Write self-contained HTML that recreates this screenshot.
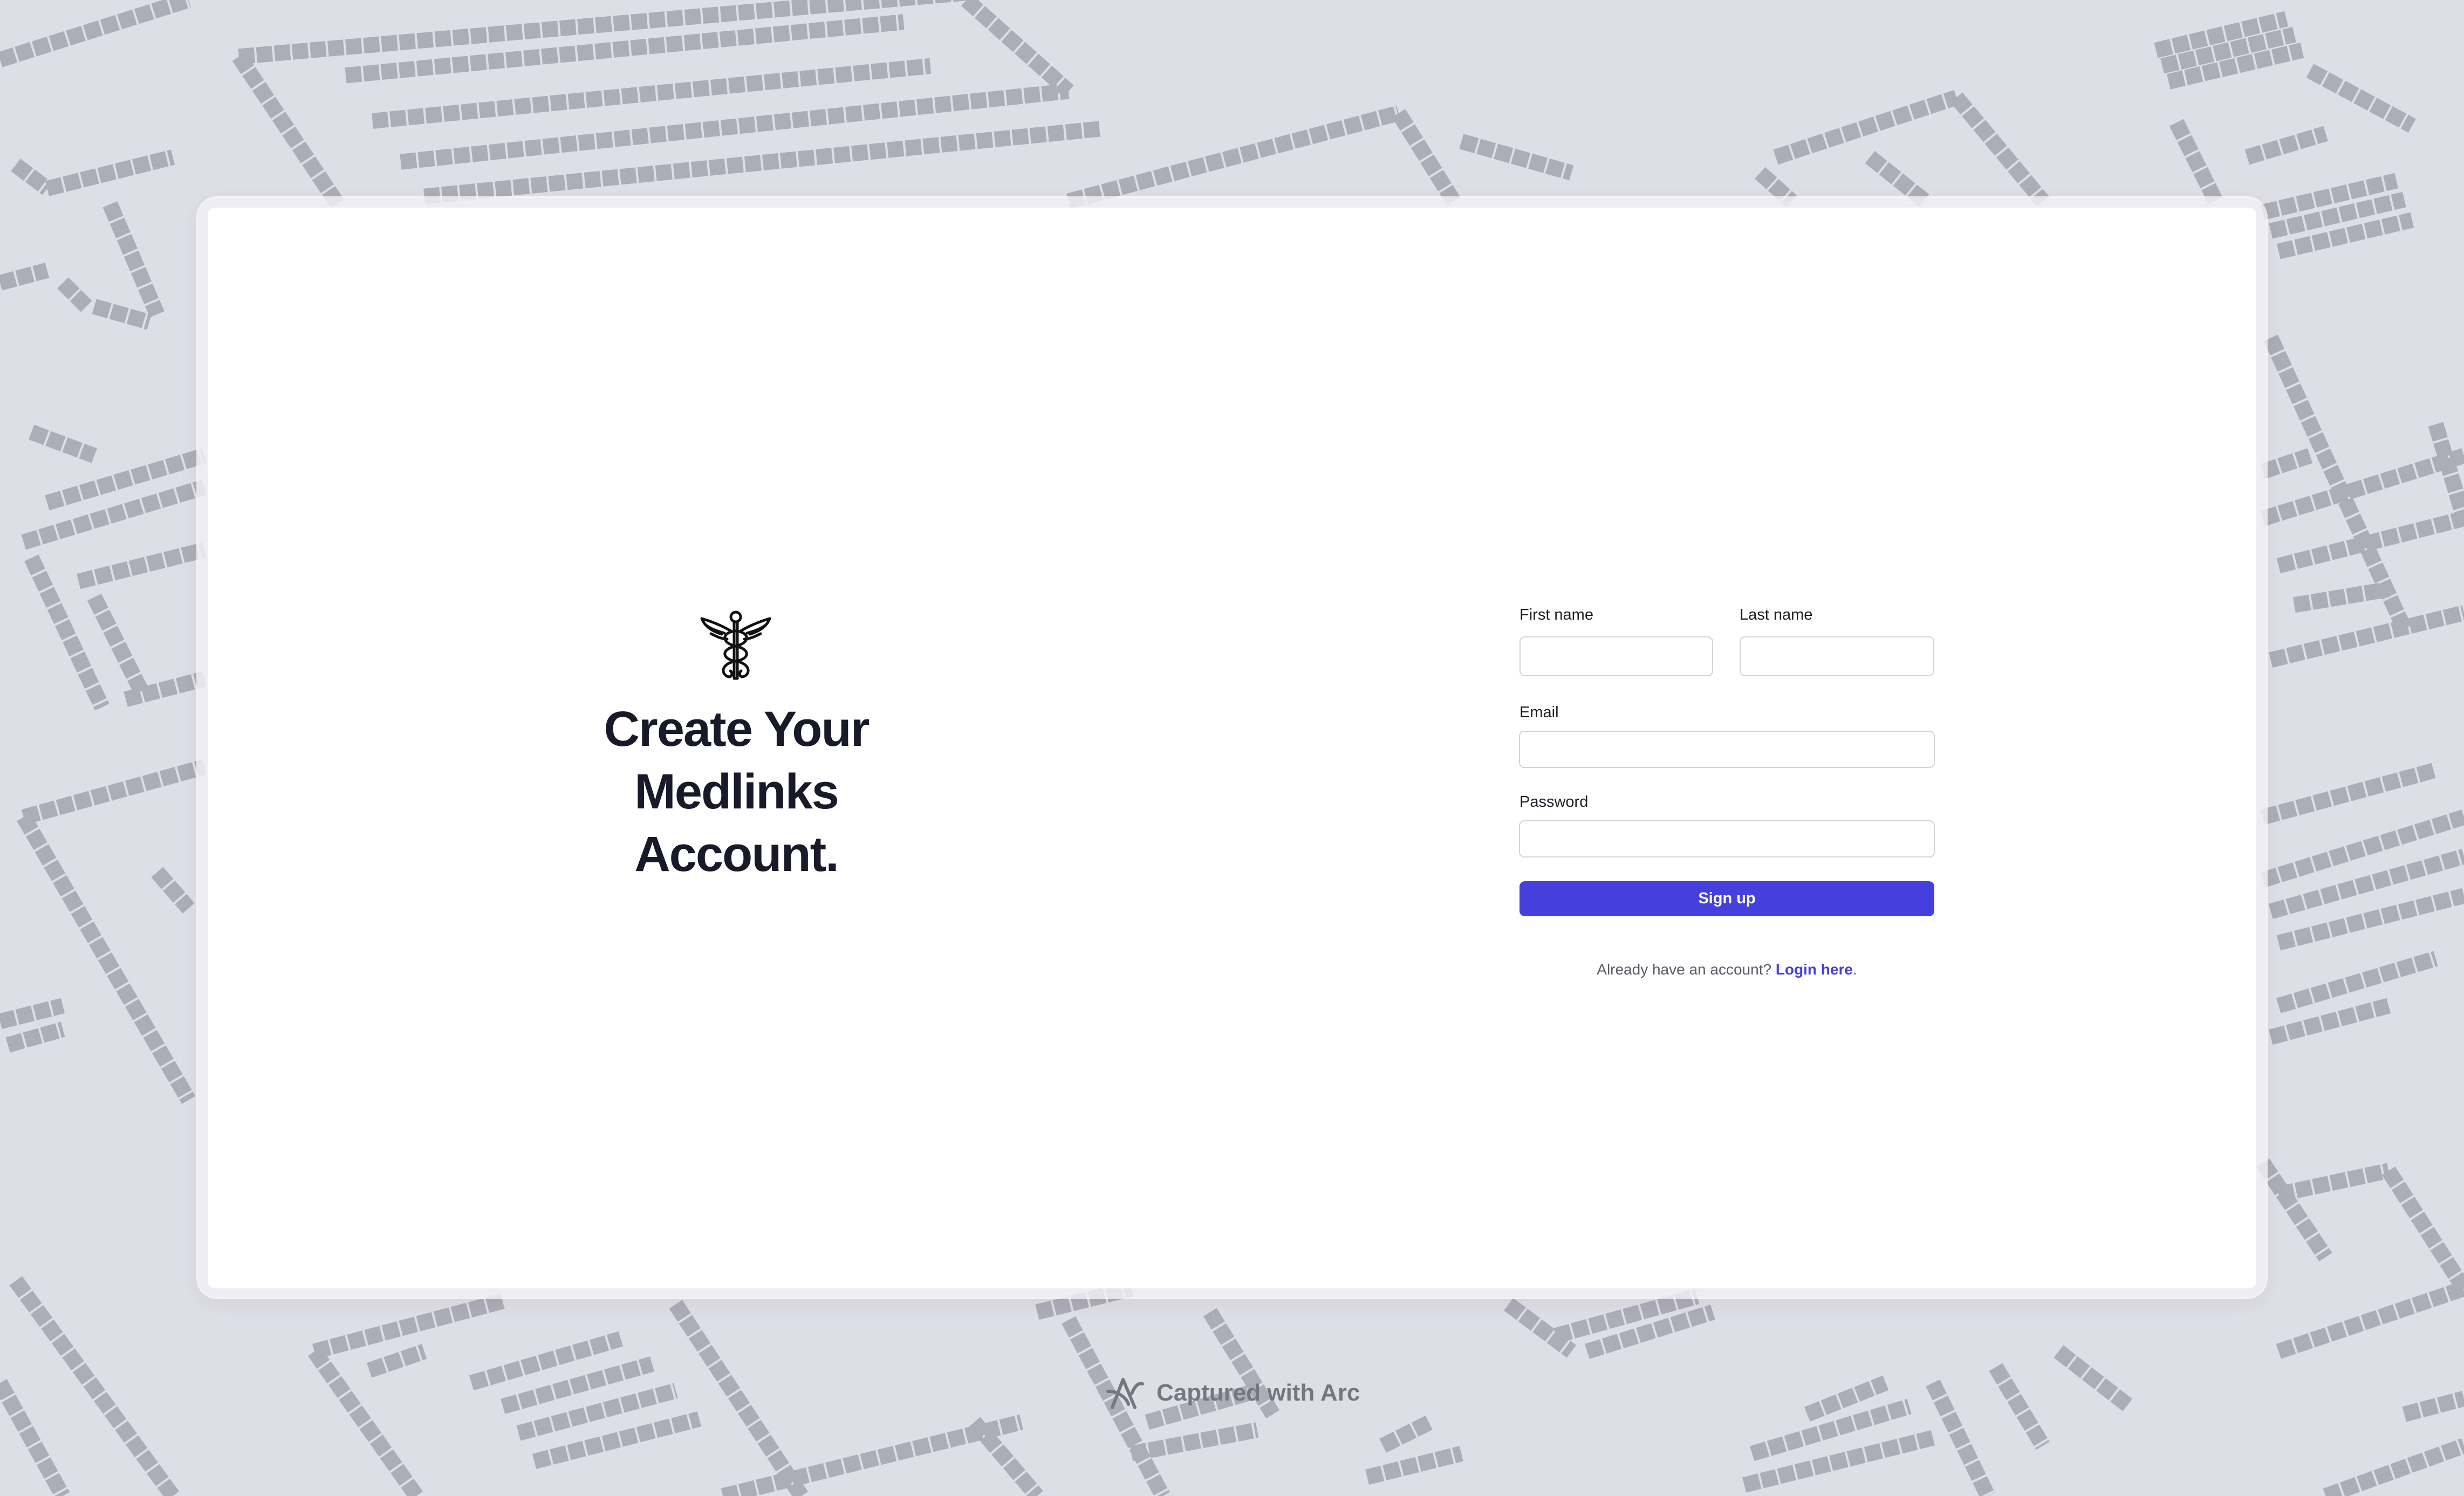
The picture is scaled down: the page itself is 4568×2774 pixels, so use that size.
<!DOCTYPE html>
<html><head><meta charset="utf-8"><style>
html,body{margin:0;padding:0}
body{width:4568px;height:2774px;position:relative;overflow:hidden;background:#dedee7;font-family:"Liberation Sans",sans-serif}
#bg{position:absolute;left:0;top:0;width:4568px;height:2774px}
.frame{position:absolute;left:367px;top:367px;width:3834px;height:2039px;border-radius:36px;background:rgba(240,240,245,0.82);box-shadow:0 0 0 3px rgba(255,255,255,0.7),0 10px 40px rgba(0,0,0,0.06)}
.card{position:absolute;left:385px;top:385px;width:3798px;height:2004px;background:#fff;border-radius:14px}
.logo{position:absolute;left:1298px;top:1130px}
h1{position:absolute;left:1085px;width:560px;top:1294px;margin:0;text-align:center;font-size:92px;line-height:116px;letter-spacing:-2px;font-weight:bold;color:#181a2a}
.lbl{position:absolute;font-size:29px;color:#1c1c24}
.inp{position:absolute;border:2px solid #d4d4dc;border-radius:10px;box-sizing:border-box;background:#fff}
.btn{position:absolute;left:2817px;top:1634px;width:769px;height:65px;background:#4540dd;border-radius:10px;color:#fff;font-weight:bold;font-size:29px;text-align:center;line-height:65px}
.foot{position:absolute;left:2817px;width:769px;top:1782px;text-align:center;font-size:28px;color:#5a5a66}
.foot b{color:#4540dd}
.arc{position:absolute;left:2048px;top:2548px;height:70px;display:flex;align-items:center;gap:22px;color:#76767e;font-weight:bold;font-size:44px}
</style></head><body>
<svg id="bg" viewBox="0 0 1568 952" preserveAspectRatio="none">
<g stroke="#adadb8" stroke-width="10" stroke-dasharray="10 1.4" fill="none">
<line x1="0" y1="38" x2="120" y2="0"/>
<line x1="152" y1="36" x2="620" y2="-5"/>
<line x1="152" y1="36" x2="215" y2="130"/>
<line x1="220" y1="48" x2="575" y2="14"/>
<line x1="237" y1="77" x2="592" y2="42"/>
<line x1="255" y1="103" x2="680" y2="58"/>
<line x1="615" y1="0" x2="680" y2="58"/>
<line x1="270" y1="125" x2="700" y2="82"/>
<line x1="680" y1="128" x2="890" y2="72"/>
<line x1="890" y1="72" x2="925" y2="128"/>
<line x1="930" y1="90" x2="1000" y2="110"/>
<line x1="1130" y1="100" x2="1245" y2="62"/>
<line x1="1245" y1="62" x2="1300" y2="128"/>
<line x1="1190" y1="100" x2="1225" y2="128"/>
<line x1="1120" y1="110" x2="1140" y2="128"/>
<line x1="1372" y1="32" x2="1455" y2="12"/>
<line x1="1376" y1="42" x2="1460" y2="22"/>
<line x1="1380" y1="52" x2="1465" y2="32"/>
<line x1="1470" y1="45" x2="1535" y2="80"/>
<line x1="1385" y1="78" x2="1410" y2="128"/>
<line x1="1430" y1="100" x2="1480" y2="85"/>
<line x1="1440" y1="135" x2="1525" y2="115"/>
<line x1="1445" y1="147" x2="1530" y2="127"/>
<line x1="1450" y1="160" x2="1535" y2="140"/>
<line x1="10" y1="105" x2="30" y2="120"/>
<line x1="30" y1="120" x2="110" y2="100"/>
<line x1="70" y1="130" x2="100" y2="200"/>
<line x1="0" y1="180" x2="30" y2="172"/>
<line x1="40" y1="180" x2="55" y2="195"/>
<line x1="60" y1="195" x2="95" y2="205"/>
<line x1="20" y1="275" x2="60" y2="290"/>
<line x1="30" y1="320" x2="130" y2="290"/>
<line x1="15" y1="345" x2="130" y2="310"/>
<line x1="20" y1="355" x2="65" y2="450"/>
<line x1="50" y1="370" x2="130" y2="350"/>
<line x1="60" y1="380" x2="90" y2="440"/>
<line x1="80" y1="445" x2="130" y2="432"/>
<line x1="15" y1="520" x2="130" y2="488"/>
<line x1="15" y1="520" x2="120" y2="700"/>
<line x1="100" y1="555" x2="120" y2="578"/>
<line x1="0" y1="650" x2="40" y2="640"/>
<line x1="5" y1="665" x2="40" y2="655"/>
<line x1="10" y1="815" x2="110" y2="952"/>
<line x1="0" y1="880" x2="40" y2="952"/>
<line x1="200" y1="860" x2="320" y2="828"/>
<line x1="200" y1="860" x2="265" y2="952"/>
<line x1="235" y1="872" x2="270" y2="860"/>
<line x1="300" y1="880" x2="395" y2="852"/>
<line x1="320" y1="895" x2="415" y2="868"/>
<line x1="330" y1="912" x2="430" y2="885"/>
<line x1="340" y1="930" x2="445" y2="903"/>
<line x1="430" y1="830" x2="510" y2="952"/>
<line x1="460" y1="952" x2="650" y2="905"/>
<line x1="620" y1="905" x2="660" y2="952"/>
<line x1="660" y1="835" x2="720" y2="820"/>
<line x1="680" y1="840" x2="740" y2="952"/>
<line x1="770" y1="835" x2="810" y2="900"/>
<line x1="730" y1="905" x2="800" y2="885"/>
<line x1="720" y1="925" x2="800" y2="910"/>
<line x1="880" y1="920" x2="910" y2="905"/>
<line x1="870" y1="940" x2="930" y2="925"/>
<line x1="960" y1="830" x2="1000" y2="860"/>
<line x1="990" y1="850" x2="1080" y2="825"/>
<line x1="1010" y1="860" x2="1090" y2="835"/>
<line x1="1150" y1="900" x2="1200" y2="880"/>
<line x1="1115" y1="925" x2="1215" y2="895"/>
<line x1="1110" y1="945" x2="1230" y2="915"/>
<line x1="1230" y1="880" x2="1265" y2="952"/>
<line x1="1270" y1="870" x2="1300" y2="920"/>
<line x1="1310" y1="860" x2="1355" y2="895"/>
<line x1="1445" y1="215" x2="1530" y2="400"/>
<line x1="1440" y1="300" x2="1470" y2="290"/>
<line x1="1440" y1="330" x2="1568" y2="290"/>
<line x1="1450" y1="360" x2="1568" y2="330"/>
<line x1="1460" y1="385" x2="1520" y2="375"/>
<line x1="1445" y1="420" x2="1568" y2="390"/>
<line x1="1550" y1="270" x2="1568" y2="330"/>
<line x1="1440" y1="520" x2="1550" y2="490"/>
<line x1="1440" y1="560" x2="1568" y2="520"/>
<line x1="1445" y1="580" x2="1568" y2="545"/>
<line x1="1450" y1="600" x2="1568" y2="570"/>
<line x1="1450" y1="640" x2="1550" y2="610"/>
<line x1="1445" y1="660" x2="1520" y2="640"/>
<line x1="1440" y1="740" x2="1480" y2="800"/>
<line x1="1450" y1="760" x2="1520" y2="745"/>
<line x1="1520" y1="745" x2="1568" y2="820"/>
<line x1="1450" y1="860" x2="1568" y2="820"/>
<line x1="1530" y1="900" x2="1568" y2="890"/>
<line x1="1480" y1="952" x2="1568" y2="920"/>
</g></svg>
<div class="frame"></div>
<div class="card"></div>
<svg class="logo" width="132" height="134" viewBox="0 0 132 134" fill="none" stroke="#111" stroke-width="5" stroke-linecap="round" stroke-linejoin="round">
<circle cx="66" cy="14" r="9"/>
<line x1="63" y1="23" x2="63" y2="128"/><line x1="69" y1="23" x2="69" y2="128"/><line x1="63" y1="128" x2="69" y2="128"/>
<path d="M57 40 C40 30 20 22 3 17 C8 30 20 40 40 46"/>
<path d="M12 30 C20 36 30 40 45 44"/>
<path d="M20 45 C30 50 40 55 50 55"/>
<path d="M75 40 C92 30 112 22 129 17 C124 30 112 40 92 46"/>
<path d="M120 30 C112 36 102 40 87 44"/>
<path d="M112 45 C102 50 92 55 82 55"/>
<path d="M66 40 C40 42 38 62 66 68 C94 74 92 92 66 96 C40 100 38 118 50 124 C58 128 62 118 56 114"/>
<path d="M66 40 C92 42 94 62 66 68 C38 74 40 92 66 96 C92 100 94 118 82 124 C74 128 70 118 76 114"/>
</svg>
<h1>Create Your Medlinks Account.</h1>
<div class="lbl" style="left:2817px;top:1124px">First name</div>
<div class="lbl" style="left:3225px;top:1124px">Last name</div>
<div class="inp" style="left:2817px;top:1180px;width:359px;height:74px"></div>
<div class="inp" style="left:3225px;top:1180px;width:361px;height:74px"></div>
<div class="lbl" style="left:2817px;top:1305px">Email</div>
<div class="inp" style="left:2816px;top:1355px;width:771px;height:69px"></div>
<div class="lbl" style="left:2817px;top:1471px">Password</div>
<div class="inp" style="left:2816px;top:1521px;width:771px;height:69px"></div>
<div class="btn">Sign up</div>
<div class="foot">Already have an account? <b>Login here</b>.</div>
<div class="arc"><svg width="74" height="66" viewBox="0 0 74 66" fill="none" stroke="#76767e" stroke-width="6" stroke-linecap="round" stroke-linejoin="round"><path d="M14 60 L34 8 L56 60"/><path d="M6 30 C20 28 40 40 44 54"/><path d="M50 34 C56 20 62 14 70 16"/></svg>Captured with Arc</div>
</body></html>
